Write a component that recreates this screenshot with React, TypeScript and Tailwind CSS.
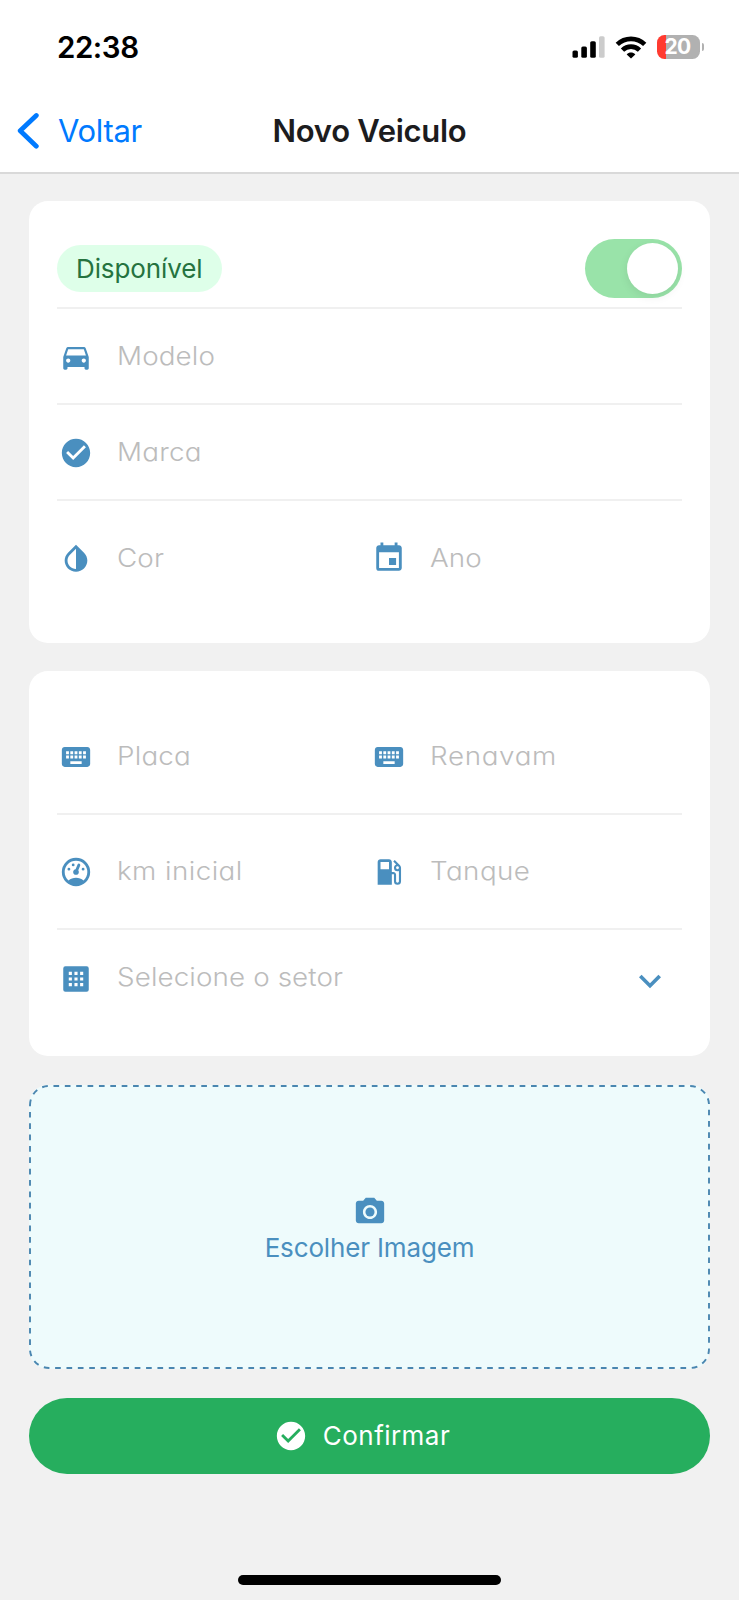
import type { ReactNode } from "react";
import {
  MdCameraAlt,
  MdCheckCircle,
  MdDirectionsCar,
  MdEvent,
  MdExpandMore,
  MdInvertColors,
  MdKeyboard,
  MdLocalGasStation,
} from "react-icons/md";

const ICON = "size-[34px] shrink-0 text-[#4a8fbf]";
const ICON_LOW = "mt-[2px] size-[34px] shrink-0 text-[#4a8fbf]";

function GaugeIcon() {
  return (
    <svg viewBox="0 0 24 24" fill="currentColor" className={ICON}>
      <path d="M17.3,18C19,16.5 20,14.4 20,12A8,8 0 0,0 12,4A8,8 0 0,0 4,12C4,14.4 5,16.5 6.7,18C8.2,16.7 10,16 12,16C14,16 15.9,16.7 17.3,18M12,2A10,10 0 0,1 22,12A10,10 0 0,1 12,22A10,10 0 0,1 2,12A10,10 0 0,1 12,2M7,9A1,1 0 0,1 8,10A1,1 0 0,1 7,11A1,1 0 0,1 6,10A1,1 0 0,1 7,9M10,6A1,1 0 0,1 11,7A1,1 0 0,1 10,8A1,1 0 0,1 9,7A1,1 0 0,1 10,6M17,9A1,1 0 0,1 18,10A1,1 0 0,1 17,11A1,1 0 0,1 16,10A1,1 0 0,1 17,9M14.4,6.1C14.9,6.3 15.1,6.9 15,7.4L13.6,10.8C13.8,11.1 14,11.5 14,12A2,2 0 0,1 12,14A2,2 0 0,1 10,12C10,11 10.7,10.1 11.7,10L13.1,6.7C13.3,6.1 13.9,5.9 14.4,6.1Z" />
    </svg>
  );
}

function GridIcon() {
  return (
    <svg viewBox="0 0 24 24" fill="currentColor" fillRule="evenodd" className={ICON}>
      <path d="M4.5 3h15A1.5 1.5 0 0 1 21 4.5v15a1.5 1.5 0 0 1-1.5 1.5h-15A1.5 1.5 0 0 1 3 19.5v-15A1.5 1.5 0 0 1 4.5 3zM6.9 6.9v2.2h2.2v-2.2zM10.9 6.9v2.2h2.2v-2.2zM14.9 6.9v2.2h2.2v-2.2zM6.9 10.9v2.2h2.2v-2.2zM10.9 10.9v2.2h2.2v-2.2zM14.9 10.9v2.2h2.2v-2.2zM6.9 14.9v2.2h2.2v-2.2zM10.9 14.9v2.2h2.2v-2.2zM14.9 14.9v2.2h2.2v-2.2z" />
    </svg>
  );
}

function StatusBar() {
  return (
    <div className="flex h-[94px] items-center justify-between pr-[35px] pl-[57px]">
      <span className="text-[29.5px] leading-9 font-semibold tracking-[-0.45px] text-black">22:38</span>
      <div className="flex items-center">
        <svg width="33" height="22" viewBox="0 0 33 22" className="mr-[10px]">
          <rect x="0.5" y="14.5" width="5.4" height="7.3" rx="1.6" />
          <rect x="9.3" y="10.5" width="5.6" height="11.3" rx="1.6" />
          <rect x="18.2" y="5.2" width="5.6" height="16.6" rx="1.6" />
          <rect x="27" y="0.2" width="5.6" height="21.6" rx="1.6" fill="#cccccc" />
        </svg>
        <svg width="32" height="23" viewBox="0 0 32 23" className="mr-[10px]" fill="none" stroke="#000" strokeWidth="4.7">
          <path d="M2.3 8.4C10 1 22 1 29.7 8.4" />
          <path d="M7.5 14.1C12.3 9.5 19.7 9.5 24.5 14.1" />
          <path d="M16 22.6l-4.3-4.2c2.4-2.4 6.2-2.4 8.6 0z" fill="#000" stroke="none" />
        </svg>
        <div className="flex items-center gap-[1.5px]">
          <div className="flex h-[24.5px] w-[43px] items-center justify-center rounded-[7.5px] bg-[linear-gradient(90deg,#ff3b30_9px,#b1b1b1_9px)] pr-[2px]">
            <span className="text-[21px] leading-6 font-bold tracking-[-0.8px] text-white">20</span>
          </div>
          <div className="h-2 w-[2.5px] rounded-r-full bg-[#b1b1b1]" />
        </div>
      </div>
    </div>
  );
}

function Field({ icon, label, className = "" }: { icon: ReactNode; label: string; className?: string }) {
  return (
    <div className="flex flex-1 items-center pl-[2px]">
      {icon}
      <span
        className={`ml-[24px] inline-block origin-left scale-x-[1.09] text-[25.5px] leading-9 font-light whitespace-nowrap text-[#bcbcbc] [font-feature-settings:'cv11'] ${className}`}
      >
        {label}
      </span>
    </div>
  );
}

export default function App() {
  return (
    <div className="flex h-[1600px] w-[739px] flex-col bg-[#f1f1f1] font-['Inter',sans-serif]">
      <header className="border-b-2 border-[#d9d9d9] bg-white">
        <StatusBar />
        <div className="grid h-[78px] grid-cols-[1fr_auto_1fr] items-center pb-[4px]">
          <div className="flex items-center pl-[17px] text-[#007aff]">
            <svg width="24" height="38" viewBox="0 0 24 38" fill="none" stroke="currentColor" strokeWidth="4.8" strokeLinecap="round" strokeLinejoin="round">
              <path d="M19.3 3.5L3.2 18.8l16.1 15.4" />
            </svg>
            <span className="ml-[17px] text-[31px] leading-9 tracking-[-0.3px]">Voltar</span>
          </div>
          <h1 className="text-[31px] leading-9 font-semibold tracking-[-0.3px] text-[#1c1c1e]">Novo Veiculo</h1>
        </div>
      </header>

      <main className="flex flex-col px-[29px] pt-[27px]">
        <section className="rounded-[19px] bg-white px-[28px] pb-[27.5px]">
          <div className="flex h-[108px] items-center justify-between border-b-2 border-[#f0f0f0] pt-[29px]">
            <span className="flex h-[47px] items-center rounded-full bg-[#deffe9] px-[19px] text-[26px] tracking-[-0.1px] text-[#25733f]">
              Disponível
            </span>
            <div className="flex h-[59px] w-[97px] items-center justify-end rounded-full bg-[#99e3a9] pr-[4px]">
              <div className="size-[51.5px] rounded-full bg-white shadow-[0_3px_10px_rgba(0,0,0,0.08)]" />
            </div>
          </div>
          <div className="flex h-24 border-b-2 border-[#f0f0f0]">
            <Field icon={<MdDirectionsCar className={ICON_LOW} />} label="Modelo" className="tracking-[0.1px]" />
          </div>
          <div className="flex h-24 border-b-2 border-[#f0f0f0]">
            <Field icon={<MdCheckCircle className={ICON_LOW} />} label="Marca" className="tracking-[0.2px]" />
          </div>
          <div className="flex h-[114px]">
            <Field icon={<MdInvertColors className={ICON_LOW} />} label="Cor" className="tracking-[0.1px]" />
            <Field icon={<MdEvent className={ICON} />} label="Ano" className="tracking-[0.1px]" />
          </div>
        </section>

        <section className="mt-[28.5px] rounded-[19px] bg-white px-[28px] pt-[29px] pb-[28px]">
          <div className="flex h-[115px] border-b-2 border-[#f0f0f0]">
            <Field icon={<MdKeyboard className={ICON} />} label="Placa" className="mb-[2px] tracking-[0.2px]" />
            <Field icon={<MdKeyboard className={ICON} />} label="Renavam" className="mb-[2px] tracking-[0.6px]" />
          </div>
          <div className="flex h-[115px] border-b-2 border-[#f0f0f0]">
            <Field icon={<GaugeIcon />} label="km inicial" className="mb-[2px] tracking-[0.4px]" />
            <Field icon={<MdLocalGasStation className={ICON} />} label="Tanque" className="mb-[2px] tracking-[0.4px]" />
          </div>
          <div className="flex h-[98px] items-center pr-[10px]">
            <Field icon={<GridIcon />} label="Selecione o setor" className="mb-[4px] tracking-[0.1px]" />
            <MdExpandMore className="mt-[3px] size-11 text-[#4a8fbf]" />
          </div>
        </section>

        <button className="relative mt-[29px] flex h-[284px] flex-col items-center justify-center rounded-[19px] bg-[#eefbfc] pt-[7px] text-[#4a8fbf]">
          <svg className="absolute inset-0" width="681" height="284" viewBox="0 0 681 284" fill="none" stroke="#4a86b0" strokeWidth="1.9" strokeDasharray="5.68 5.69">
            <path d="M1 20A19 19 0 0 1 20 1H661A19 19 0 0 1 680 20V264A19 19 0 0 1 661 283H20A19 19 0 0 1 1 264Z" />
          </svg>
          <MdCameraAlt className={ICON} />
          <span className="mt-px text-[26px] leading-9 tracking-[-0.15px]">Escolher Imagem</span>
        </button>

        <button className="mt-[28.5px] flex h-[76px] items-center justify-center rounded-full bg-[#26ae5e] pt-px pr-[15px] text-white">
          <MdCheckCircle className="size-[34px]" />
          <span className="ml-[15px] text-[26px] leading-9 tracking-[0.45px]">Confirmar</span>
        </button>
      </main>

      <div className="mt-auto mb-[15px] h-[10px] w-[263px] self-center rounded-full bg-black" />
    </div>
  );
}
